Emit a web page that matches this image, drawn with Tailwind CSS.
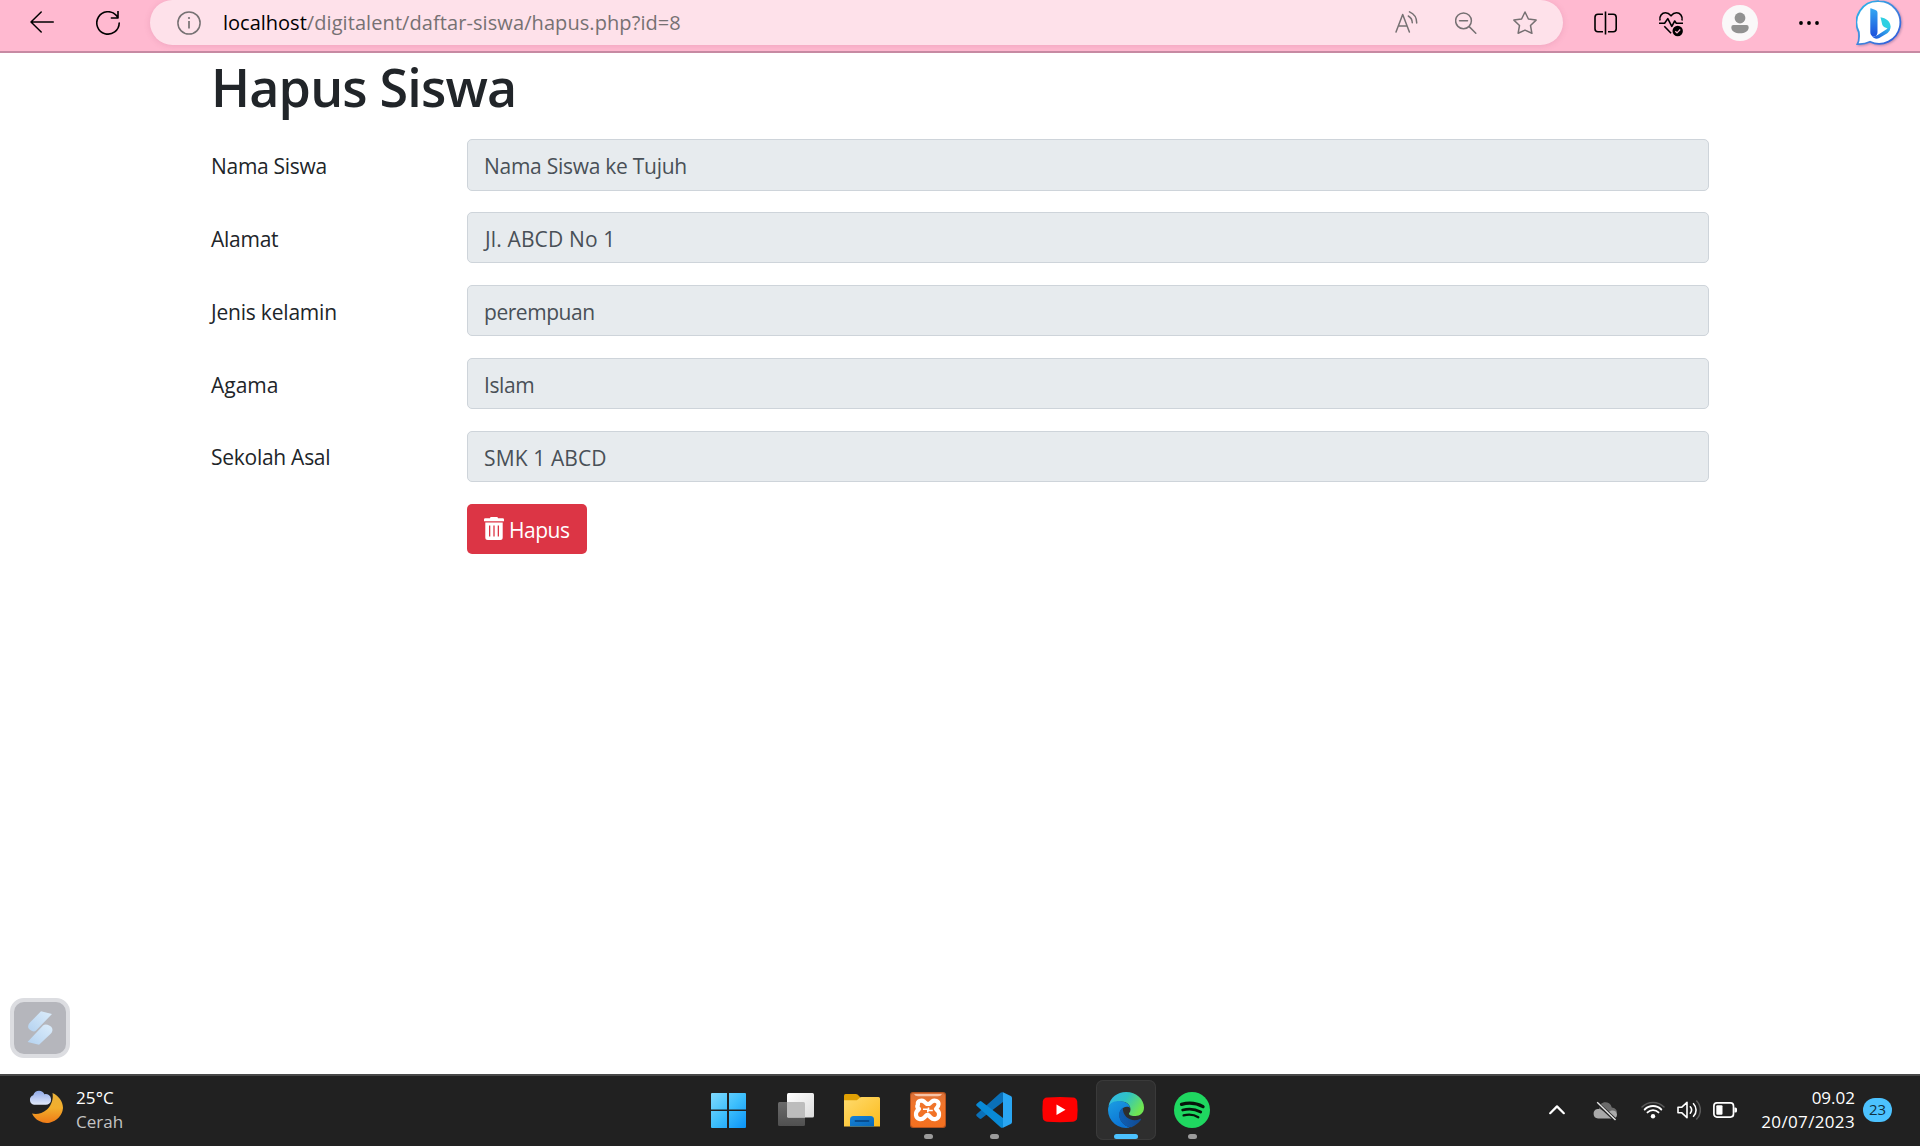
<!DOCTYPE html>
<html lang="id">
<head>
<meta charset="utf-8">
<title>Hapus Siswa</title>
<script src="https://cdn.jsdelivr.net/npm/@tailwindcss/browser@4"></script>
</head>
<body class="relative flex h-[1146px] w-[1920px] flex-col overflow-hidden bg-white font-['Open_Sans',sans-serif]">

<!-- Browser toolbar -->
<header class="flex h-[53px] shrink-0 items-start border-b-2 border-[#c78aa3] bg-[#ffb9d0] pl-[30px] text-black">
  <div class="flex h-[45px] w-[120px] shrink-0 items-center gap-[42px]">
    <svg class="size-6 shrink-0" viewBox="0 0 24 24" fill="none" stroke="currentColor" stroke-width="1.5" stroke-linecap="round" stroke-linejoin="round"><path d="M23.3 11H1M11.2 1L1 11l10.2 10"/></svg>
    <svg class="size-6 shrink-0" viewBox="0 0 24 24" fill="none" stroke="currentColor" stroke-width="1.6" stroke-linecap="round" stroke-linejoin="round"><path d="M23.2 12A11.2 11.2 0 1 1 20.3 4.4L22 6.6M22 .4v6.6h-6.6"/></svg>
  </div>
  <div class="flex h-[45px] w-[1413px] shrink-0 items-center rounded-[23px] bg-[#fee1ea] pr-[26px] pl-[27px] text-[#767173] shadow-[0_1px_6px_rgba(150,60,100,0.15)]">
    <svg class="size-6 shrink-0" viewBox="0 0 24 24" fill="none" stroke="currentColor" stroke-width="1.5"><circle cx="12" cy="12" r="11.1"/><path d="M12 10v7.5" stroke-width="1.7"/><circle cx="12" cy="7" r="1.1" fill="currentColor" stroke="none"/></svg>
    <div class="ml-[22px] text-[20px] leading-[44px] tracking-[0.08px] whitespace-pre"><span class="tracking-normal text-black">localhost</span>/digitalent/daftar-siswa/hapus.php?id=8</div>
    <svg class="ml-auto size-6 shrink-0" viewBox="0 0 24 24" fill="none" stroke="currentColor" stroke-width="1.5" stroke-linecap="round" stroke-linejoin="round"><path d="M1 21L7.7 3.4 14.4 21M3.3 15h8.800"/><path d="M13.300 5a8 8 0 0 1 4 6.800M14.500.9a12 12 0 0 1 7.200 11.200"/></svg>
    <svg class="ml-[36px] size-6 shrink-0" viewBox="0 0 24 24" fill="none" stroke="currentColor" stroke-width="1.500" stroke-linecap="round"><circle cx="8.500" cy="9.800" r="7.900"/><path d="M4.500 9.800h8M14.200 15.600l6.600 6.600"/></svg>
    <svg class="ml-[34px] size-6 shrink-0" viewBox="0 0 24 24" fill="none" stroke="currentColor" stroke-width="1.500" stroke-linejoin="round"><path d="M12 1l3.400 7 7.700 1.100-5.600 5.400 1.400 7.800L12 19.100l-6.900 3.200 1.400-7.800L.9 9.100 8.600 8z"/></svg>
  </div>
  <div class="flex h-[45px] items-center pl-[31px]">
    <svg class="size-6 shrink-0" viewBox="0 0 24 24" fill="none" stroke="currentColor" stroke-width="1.600"><path d="M9 3.300H4a3 3 0 0 0-3 3v11.400a3 3 0 0 0 3 3h5M14 3.300h5.200a3 3 0 0 1 3 3v11.400a3 3 0 0 1-3 3H14M11.500.5v23"/></svg>
    <svg class="ml-[41px] size-6 shrink-0 overflow-visible" viewBox="0 0 24 24" fill="none" stroke="currentColor" stroke-width="1.600" stroke-linejoin="round"><path d="M1 9.500C0 5 3 1.800 6.500 1.800c2.500 0 4 1.200 5.500 3 1.500-1.800 3-3 5.500-3 3.500 0 6.500 3.200 5.500 7.700M0 12.200h5.600L8.800 7.600l4 7.800 2.900-5.400 1.600 2.200H24M5.300 15.300l6.800 6.900"/><circle cx="18.700" cy="20" r="5.200" fill="currentColor" stroke="none"/><path d="M16.300 20.200l1.700 1.600 3.200-3.300" stroke="#ffb9d0" stroke-width="1.200"/></svg>
    <svg class="ml-[39px] size-9 shrink-0" viewBox="0 0 36 36"><circle cx="18" cy="18" r="18" fill="#faf8f9"/><circle cx="18" cy="13" r="5.400" fill="#919191"/><path d="M11.500 20h13a2.200 2.200 0 0 1 2.200 2.200c0 4-4 6-8.700 6s-8.700-2-8.700-6a2.200 2.200 0 0 1 2.200-2.200z" fill="#919191"/></svg>
    <svg class="ml-[41px] h-6 w-5 shrink-0" viewBox="0 0 20 24"><circle cx="2" cy="12" r="1.900"/><circle cx="10" cy="12" r="1.900"/><circle cx="18" cy="12" r="1.900"/></svg>
    <svg class="ml-[37px] h-[46px] w-[46px] shrink-0 drop-shadow-[1px_1px_1px_rgba(60,60,120,0.35)]" viewBox="0 0 46 46">
      <defs>
        <linearGradient id="bingRing" x1="0" y1="0" x2="1" y2="1"><stop offset="0" stop-color="#27b9ec"/><stop offset=".5" stop-color="#4288dd"/><stop offset="1" stop-color="#2c55dc"/></linearGradient>
        <linearGradient id="bingStem" x1="0" y1="0" x2="0" y2="1"><stop offset="0" stop-color="#35a9f3"/><stop offset="1" stop-color="#1b50dc"/></linearGradient>
        <linearGradient id="bingLeaf" x1="0" y1="1" x2="1" y2="0"><stop offset="0" stop-color="#1b50dc"/><stop offset="1" stop-color="#38c8f0"/></linearGradient>
      </defs>
      <path d="M23 1.200a21.300 21.300 0 1 1-9 40.600C10 43.600 5 44.300 1.400 44c1.800-2.800 2-6.500 1.400-12A21.300 21.300 0 0 1 23 1.200z" fill="#fff" stroke="url(#bingRing)" stroke-width="1.800"/>
      <path d="M14.800 8.200l4.700 1.700a2.900 2.900 0 0 1 2 2.800v19.500c0 3-2.200 4.600-4.200 4.200-1.800-.4-3-2-3-4.200V8.700q0-.7.500-.5z" fill="url(#bingStem)"/>
      <path d="M24.500 17.200c5.500 1 10 3.700 10 9.300a7.500 7.500 0 0 1-1.500 4.500c-.6-2-2-3-3.800-3.600-1.600-.6-2.400-1.500-3-3z" fill="#2ed0e2"/>
      <path d="M16 36.300c2.500.4 4-.4 5.700-1.400l6.500-4.200c2-1.300 4.500-2.500 6-5.200.7 4.500-1.500 7-4.200 8.600l-6.700 4c-2.700 1.400-5.500.6-7.300-1.800z" fill="url(#bingLeaf)"/>
    </svg>
  </div>
</header>

<!-- Page content -->
<main class="flex grow flex-col pr-[211px] pl-[211px] text-[21px] text-[#212529]">
  <h1 class="mb-[18.300px] h-[68px] text-[52px] leading-[68px] font-semibold tracking-[-0.820px]">Hapus Siswa</h1>
  <form class="flex flex-col gap-[21.600px]">
    <div class="flex h-[51.300px] items-center"><label class="w-[256px] shrink-0 pt-[3px] tracking-[-0.300px]">Nama Siswa</label><div class="flex h-full grow items-center rounded-[5px] border border-[#ced4da] bg-[#e7ebee] pt-[4px] pl-[16px] tracking-[-0.270px] text-[#495057]">Nama Siswa ke Tujuh</div></div>
    <div class="flex h-[51.300px] items-center"><label class="w-[256px] shrink-0 pt-[3px] tracking-[-0.250px]">Alamat</label><div class="flex h-full grow items-center rounded-[5px] border border-[#ced4da] bg-[#e7ebee] pt-[4px] pl-[17px] tracking-[0.140px] text-[#495057]">Jl. ABCD No 1</div></div>
    <div class="flex h-[51.300px] items-center"><label class="w-[256px] shrink-0 pt-[5px] tracking-[-0.200px]">Jenis kelamin</label><div class="flex h-full grow items-center rounded-[5px] border border-[#ced4da] bg-[#e7ebee] pt-[4px] pl-[16px] tracking-[-0.450px] text-[#495057]">perempuan</div></div>
    <div class="flex h-[51.300px] items-center"><label class="w-[256px] shrink-0 pt-[4px]">Agama</label><div class="flex h-full grow items-center rounded-[5px] border border-[#ced4da] bg-[#e7ebee] pt-[4px] pl-[16px] tracking-[-0.400px] text-[#495057]">Islam</div></div>
    <div class="flex h-[51.300px] items-center"><label class="w-[256px] shrink-0 pt-[3px] tracking-[-0.270px]">Sekolah Asal</label><div class="flex h-full grow items-center rounded-[5px] border border-[#ced4da] bg-[#e7ebee] pt-[4px] pl-[16px] tracking-[0.120px] text-[#495057]">SMK 1 ABCD</div></div>
    <div class="flex pl-[256px]">
      <button type="button" class="flex h-[50px] w-[120px] items-center rounded-[5px] bg-[#dc3545] pl-[17px] text-white">
        <svg class="h-[23px] w-5 shrink-0" viewBox="0 0 20 23"><path fill="currentColor" fill-rule="evenodd" d="M6 1.200Q6 0 7.200 0h5.600Q14 0 14 1.200h4.800q1.200 0 1.200 1.300V4.200H0V2.500Q0 1.200 1.200 1.200zM1.300 5.600h17.400V20.500a2.500 2.500 0 0 1-2.500 2.500H3.800a2.500 2.500 0 0 1-2.500-2.500zM5 8.600v11h1.300v-11zM9.350 8.600v11h1.300v-11zM13.700 8.600v11H15v-11z"/></svg>
        <span class="pt-[3px] pl-[5px] tracking-[-0.500px]">Hapus</span>
      </button>
    </div>
  </form>
</main>

<!-- Floating recorder button -->
<div class="absolute top-[998px] left-[10px] flex size-[60px] items-center justify-center rounded-[14px] border-4 border-[#dcdde1] bg-[#b5b6bc]">
  <svg class="h-[34px] w-[26px]" viewBox="0 0 26 34">
    <defs><linearGradient id="ribbon" x1="0" y1="1" x2="1" y2="0"><stop offset="0" stop-color="#b4d2f0"/><stop offset="1" stop-color="#dcedfb"/></linearGradient></defs>
    <path d="M14 .3L25 3 9 19.500Q7.500 21 5 20Q.2 18 1.300 14.500Q1.500 13 3 11.500z" fill="url(#ribbon)"/>
    <path d="M12 33.700L.6 31 16 14.500q1.700-1.600 4.500-.8Q26.300 15.600 25.300 20q-.4 1.500-1.600 2.700z" fill="url(#ribbon)"/>
  </svg>
</div>

<!-- Taskbar -->
<footer class="flex h-[72px] shrink-0 border-t-2 border-[#484848] bg-[#212121] text-[17px] text-white">
  <div class="flex w-[698px] shrink-0 items-start pt-[10px] pl-[28px]">
    <svg class="mt-[4px] h-[36px] w-[36px] shrink-0" viewBox="0 0 36 36">
      <defs>
        <linearGradient id="moon" x1="0" y1="0" x2="0" y2="1"><stop offset="0" stop-color="#e9b13a"/><stop offset=".5" stop-color="#f2ae2c"/><stop offset="1" stop-color="#ef7b17"/></linearGradient>
        <linearGradient id="cloud" x1="0" y1="0" x2="0" y2="1"><stop offset="0" stop-color="#8fa9e8"/><stop offset="1" stop-color="#e3eafb"/></linearGradient>
      </defs>
      <path d="M24.500 3C30.500 5.500 35 11.500 35 18a16.300 16.300 0 0 1-31 5.500C8 24.500 14 24 19 19.500S25.500 8 24.500 3z" fill="url(#moon)"/>
      <path d="M6 14.800a5 5 0 0 1-.8-9.600C6.200 2 8.500.7 11 .7s4.600 1.400 5.400 3.500A5.400 5.400 0 1 1 17 14.800z" fill="url(#cloud)"/>
    </svg>
    <div class="pl-[12px] leading-6"><div class="tracking-[0.100px]">25°C</div><div class="text-[#c4c4c4]">Cerah</div></div>
  </div>

  <div class="flex shrink-0 gap-[6px] pt-[4px]">
    <div class="mr-[2px] flex h-[60px] w-[60px] justify-center pt-[12px]">
      <svg class="size-9" viewBox="0 0 36 36"><defs><linearGradient id="win" gradientUnits="userSpaceOnUse" x1="0" y1="0" x2="36" y2="36"><stop offset="0" stop-color="#85dcff"/><stop offset=".5" stop-color="#3fc0fc"/><stop offset="1" stop-color="#0a93f7"/></linearGradient></defs><path fill="url(#win)" d="M2 1h15v16.500H1V2q0-1 1-1zM19 1h16q1 0 1 1v15.500H19zM1 19h16v17H2q-1 0-1-1zM19 19h17v16q0 1-1 1H19z"/></svg>
    </div>
    <div class="flex h-[60px] w-[60px] justify-center pt-[12px]">
      <svg class="h-9 w-[37px]" viewBox="0 0 37 36"><defs><linearGradient id="tvFront" x1="0" y1="0" x2="1" y2="1"><stop offset="0" stop-color="#fff"/><stop offset="1" stop-color="#dcdcdc"/></linearGradient><linearGradient id="tvBack" x1="0" y1="0" x2="0" y2="1"><stop offset="0" stop-color="#6b6b6b"/><stop offset="1" stop-color="#505050"/></linearGradient></defs><rect y="10" width="27" height="24" rx="1.500" fill="url(#tvBack)"/><rect x="9" y="1" width="27" height="24.500" rx="1.500" fill="url(#tvFront)"/><path d="M9 10h16.500q1.500 0 1.500 1.500v14H10.500Q9 25.500 9 24z" fill="#bdbdbd"/></svg>
    </div>
    <div class="flex h-[60px] w-[60px] justify-center pt-[12px]">
      <svg class="size-9" viewBox="0 0 36 36"><defs><linearGradient id="folder" x1="0" y1="0" x2="1" y2="1"><stop offset="0" stop-color="#ffdb6e"/><stop offset="1" stop-color="#fbbb1c"/></linearGradient><linearGradient id="pocket" x1="0" y1="0" x2="1" y2="1"><stop offset="0" stop-color="#1683d8"/><stop offset="1" stop-color="#0968b8"/></linearGradient></defs><path d="M0 3.500Q0 2 1.500 2h10.300q1.200 0 2 .8L16.500 5.500V12H0z" fill="#e0a004"/><path d="M0 8.300h11.500q1.300 0 2.300-.9L15.500 6q1-.9 2.200-.9H34.500Q36 5.100 36 6.600V34.500H0z" fill="url(#folder)"/><path d="M6 34.500V27.500Q6 24 9.500 24h17Q30 24 30 27.500V34.500z" fill="url(#pocket)"/><path d="M11.500 29h13" stroke="#064d8f" stroke-width="1.800" stroke-linecap="round"/></svg>
    </div>
    <div class="flex h-[60px] w-[60px] flex-col items-center pt-[12px]">
      <svg class="size-9" viewBox="0 0 36 36"><defs><linearGradient id="xampp" x1="0" y1="0" x2="0" y2="1"><stop offset="0" stop-color="#d9703a"/><stop offset=".3" stop-color="#f0752b"/><stop offset="1" stop-color="#f4701f"/></linearGradient></defs><rect width="36" height="36" rx="3" fill="#b4521e"/><rect x="1" y="1" width="34" height="34" rx="3" fill="url(#xampp)"/><path d="M4 2h28q-1 2.200-4 2.200H8Q5 4.200 4 2z" fill="#f6c3a6"/><g fill="none" stroke="#fff" stroke-width="4.200" stroke-linejoin="round" stroke-linecap="round"><path d="M8 12.500C7 9 11.500 7.500 14 9.500l2.500 2.300h3L22 9.500c2.500-2 7-.5 6.500 3 0 2-1 3-2.500 4.500 2 1.500 3.500 3.500 3 6.300-.6 4-5.500 5.200-8.300 2.200l-2.200-2.300h-2l-2.200 2.300c-2.800 3-7.700 1.800-8.300-2.200-.4-2.800 1-4.800 3-6.300-1.500-1.200-2.500-2.500-1-4.500z"/></g><path d="M13 17.300h5.500v-1.800M17.800 20.500v-2h5" fill="none" stroke="#fff" stroke-width="1.600"/></svg>
      <div class="mt-[6px] h-[5px] w-[9px] rounded-full bg-[#9b9b9b]"></div>
    </div>
    <div class="flex h-[60px] w-[60px] flex-col items-center pt-[12px]">
      <svg class="size-9" viewBox="0 0 36 36"><path d="M27 .3V10L5.500 26.500q-1 .8-2 0L.8 24.200q-1.200-1.100 0-2.200L24.500.8Q25.600-.2 27 .3z" fill="#0a70b8"/><path d="M27 35.700V26L5.500 9.500q-1-.8-2 0L.8 11.800q-1.200 1.100 0 2.200L24.500 35.200q1.100 1 2.500.5z" fill="#098ad6"/><path d="M27 .3l7.800 3.700Q36 4.600 36 6v24q0 1.400-1.200 2L27 35.700z" fill="#2aa6f2"/></svg>
      <div class="mt-[6px] h-[5px] w-[9px] rounded-full bg-[#9b9b9b]"></div>
    </div>
    <div class="flex h-[60px] w-[60px] justify-center pt-[12px]">
      <svg class="size-9" viewBox="0 0 36 36"><path d="M5 5.600Q18 4.600 31 5.600q3.600.3 4.200 4Q36 18 35.200 26q-.6 3.400-4.200 3.700Q18 30.600 5 29.700 1.400 29.400.8 26 0 18 .8 9.600 1.400 5.900 5 5.600z" fill="#fe0000"/><path d="M14.500 12.500v10.600l9-5.300z" fill="#fff"/></svg>
    </div>
    <div class="flex h-[60px] w-[60px] flex-col items-center rounded-[7px] bg-[#2e2e2e] pt-[12px] ring-1 ring-[#3a3a3a] ring-inset">
      <svg class="size-9" viewBox="0 0 36 36"><defs><linearGradient id="edgeTop" x1="0" y1="0" x2="1" y2=".5"><stop offset="0" stop-color="#32b5ee"/><stop offset=".5" stop-color="#2fc3c4"/><stop offset="1" stop-color="#6fe552"/></linearGradient><linearGradient id="edgeBody" x1="0" y1="0" x2=".5" y2="1"><stop offset="0" stop-color="#1b9de2"/><stop offset="1" stop-color="#0b73d4"/></linearGradient><linearGradient id="edgeDark" x1="0" y1="0" x2="1" y2="0"><stop offset="0" stop-color="#0f5fb4"/><stop offset="1" stop-color="#124a91"/></linearGradient></defs>
        <path d="M.5 14C2.200 5.500 9.500 0 18 0c10.500 0 18 7.500 18 15.500 0 5.500-4 8.500-8.500 8.500-3.300 0-6.500-.8-6.500-2.300 0-.9 1.500-1.500 1.500-4.200 0-4.500-4-8-9.500-8S3 11 .5 14z" fill="url(#edgeTop)"/>
        <path d="M0 18C0 12 4.500 9 11 9c6 0 10.500 3 11.300 7.200C20 13.500 14 15 12 19.500 9.500 25.500 14 33 22 35.500A18 18 0 0 1 0 18z" fill="url(#edgeBody)"/>
        <path d="M14.800 15.500C10 19 9.800 26 14.500 31c3 3.200 6.500 4.400 9 4.200 4-1.700 7-4.200 9.300-7.200.5-.8 0-1.400-.9-1C24.500 30.500 14.500 26 14.800 15.500z" fill="url(#edgeDark)"/>
      </svg>
      <div class="mt-[6px] h-[5px] w-[24px] rounded-full bg-[#4cc2ff]"></div>
    </div>
    <div class="flex h-[60px] w-[60px] flex-col items-center pt-[12px]">
      <svg class="size-9" viewBox="0 0 36 36"><circle cx="18" cy="18" r="18" fill="#1fd760"/><g fill="none" stroke="#06140b" stroke-linecap="round"><path d="M7.500 12.300c7.500-2 15-1.300 21.500 2.300" stroke-width="3.300"/><path d="M8.700 18c6.500-1.700 12.600-1 18 2" stroke-width="2.800"/><path d="M9.600 23.400c5.200-1.300 10.500-.8 14.700 1.800" stroke-width="2.300"/></g></svg>
      <div class="mt-[6px] h-[5px] w-[9px] rounded-full bg-[#9b9b9b]"></div>
    </div>
  </div>

  <!-- System tray -->
  <div class="ml-auto flex h-[67px] items-center pr-[28px]">
    <svg class="h-6 w-4 shrink-0" viewBox="0 0 16 24" fill="none" stroke="currentColor" stroke-width="2.200" stroke-linecap="round" stroke-linejoin="round"><path d="M1.200 15.200L8 8.400l6.800 6.800"/></svg>
    <svg class="ml-[28px] h-6 w-6 shrink-0" viewBox="0 0 24 24"><path d="M6 12a6.500 6.500 0 0 1 12.800-2.500C22 9.700 24 12 24 14.500L14 17z" fill="#6a6a6a"/><path d="M5 20.500A4.800 4.800 0 0 1 4.500 11c2-.2 3.500.4 5.500 1.800l4 2 4-2c3-.8 6 .8 6 3.800a4 4 0 0 1-4 3.900z" fill="#a9a9a9"/><path d="M3.500 4.500l19.500 18" stroke="#212121" stroke-width="3.500"/><path d="M4.200 4.200L22.500 22" stroke="#e8e8e8" stroke-width="1.400"/></svg>
    <svg class="ml-[24px] h-6 w-6 shrink-0" viewBox="0 0 24 24" fill="none" stroke="#fff" stroke-width="1.900" stroke-linecap="round"><path d="M1 9a15.500 15.500 0 0 1 22 0" stroke="#5a5a5a" stroke-width="1.500"/><path d="M3.700 11.500a11.700 11.700 0 0 1 16.600 0M6.500 14.400a7.800 7.800 0 0 1 11 0"/><circle cx="12" cy="18.200" r="2.200" fill="#fff" stroke="none"/></svg>
    <svg class="ml-[12px] h-6 w-6 shrink-0" viewBox="0 0 24 24" fill="none" stroke="#fff" stroke-width="1.600" stroke-linecap="round" stroke-linejoin="round"><path d="M1 9.300h3.600L10 4.300v15.400l-5.400-5H1z"/><path d="M13.300 8.800a5 5 0 0 1 0 6.400M16.500 5.700a9 9 0 0 1 0 12.600"/><path d="M19.700 3a13 13 0 0 1 0 18" stroke="#5a5a5a"/></svg>
    <svg class="ml-[12px] h-6 w-6 shrink-0" viewBox="0 0 24 24"><rect x=".9" y="4.900" width="19.600" height="14.200" rx="3" fill="none" stroke="#fff" stroke-width="1.700"/><rect x="3.300" y="7.300" width="6.200" height="9.400" rx="1" fill="#fff"/><path d="M21.400 9.500h1q1.600 0 1.600 1.600v1.800q0 1.600-1.600 1.600h-1z" fill="#fff"/></svg>
    <div class="ml-[23px] w-[95px] text-right leading-6 whitespace-nowrap"><div>09.02</div><div class="tracking-[0.350px]">20/07/2023</div></div>
    <div class="ml-[8px] flex h-6 w-[29px] items-center justify-center rounded-full bg-[#4cc2ff] text-[15px] tracking-[-0.200px] text-[#10303f]">23</div>
  </div>
</footer>
</body>
</html>
